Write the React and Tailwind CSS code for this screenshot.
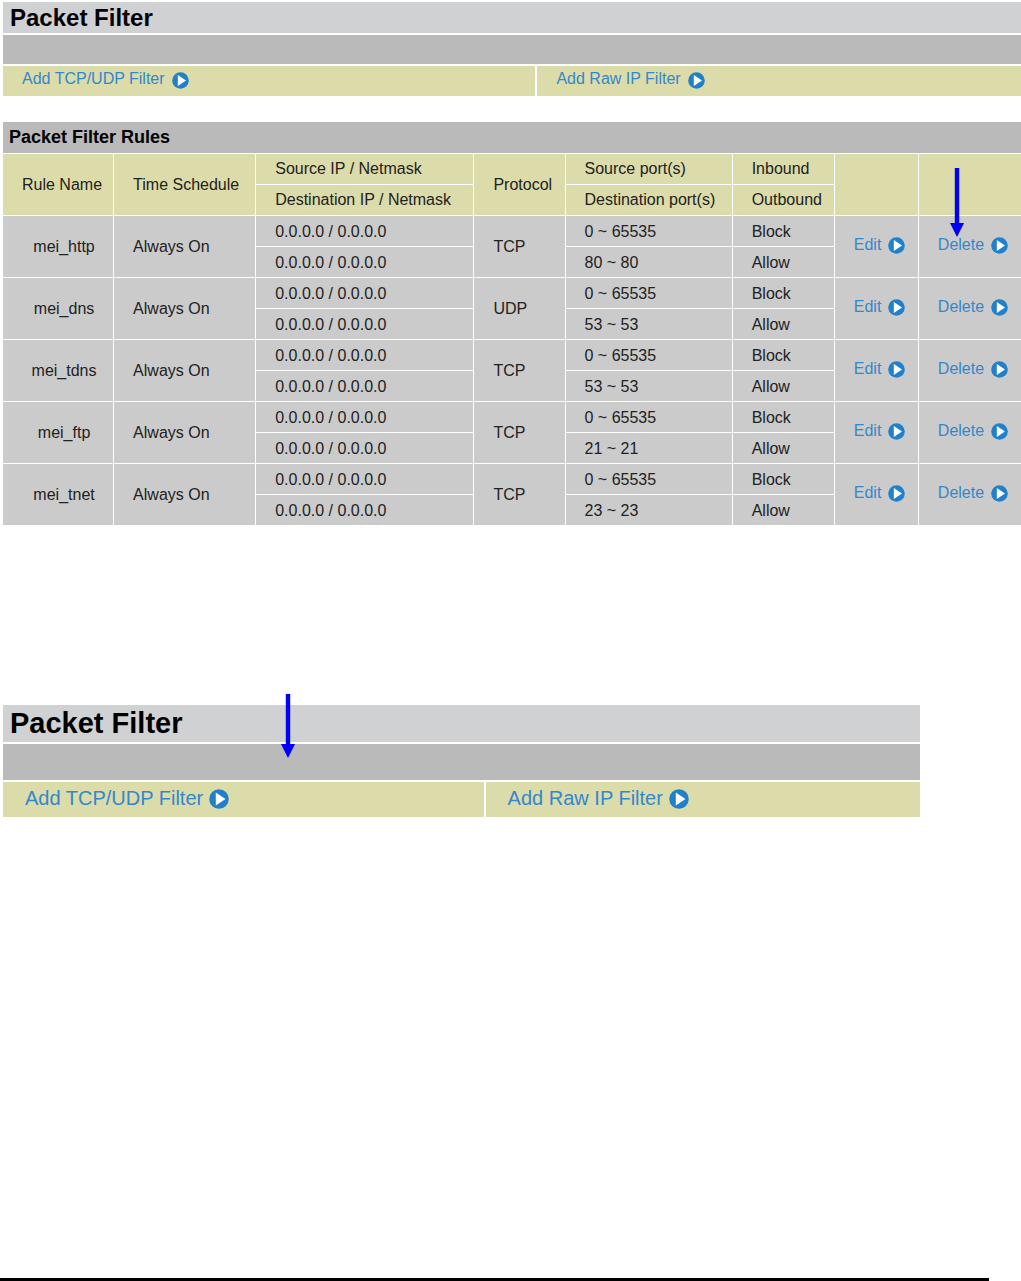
import clsx from 'clsx';

const rules = [
  { name: 'mei_http', protocol: 'TCP', port: '80 ~ 80' },
  { name: 'mei_dns', protocol: 'UDP', port: '53 ~ 53' },
  { name: 'mei_tdns', protocol: 'TCP', port: '53 ~ 53' },
  { name: 'mei_ftp', protocol: 'TCP', port: '21 ~ 21' },
  { name: 'mei_tnet', protocol: 'TCP', port: '23 ~ 23' },
];

const PlayIcon = ({ className }) => (
  <svg viewBox="0 0 17 17" className={clsx('shrink-0', className)} aria-hidden="true">
    <circle cx="8.5" cy="8.5" r="8.3" fill="#2080cc" />
    <path d="M5.8 2.9 L14 8.5 L5.8 14.1 Z" fill="#fff" />
  </svg>
);

const ActionLink = ({ children, large }) => (
  <a
    href="#"
    className={clsx(
      'inline-flex items-center text-[#3388cc] hover:underline',
      large ? 'gap-1.5 text-xl leading-6' : 'gap-[7px] text-base leading-5'
    )}
  >
    {children}
    <PlayIcon className={large ? 'mt-0.5 size-5' : 'mt-0.5 size-[17px]'} />
  </a>
);

// Blue pointer drawn over the tables
const Arrow = ({ className, height }) => (
  <svg
    width="14"
    height={height}
    viewBox={`0 0 14 ${height}`}
    className={clsx('absolute z-10', className)}
    aria-hidden="true"
  >
    <path
      d={`M4.8 0 H9.2 V${height - 14} H14 L7 ${height} L0 ${height - 14} H4.8 Z`}
      fill="#0000ff"
    />
  </svg>
);

const FilterPanel = ({ large }) => (
  <section className="flex flex-col gap-0.5">
    <h1
      className={clsx(
        'bg-[#d0d1d3] pl-[7px] font-bold text-black',
        large ? 'h-[37px] text-[29px] leading-9' : 'h-[31px] text-2xl leading-[31px]'
      )}
    >
      Packet Filter
    </h1>
    <div className={clsx('bg-[#bababa]', large ? 'h-9' : 'h-[29px]')} />
    <nav className={clsx('flex gap-0.5', large ? 'h-[35px]' : 'h-[30px]')}>
      <div className={clsx('bg-[#dcdbaa]', large ? 'w-[52.4%] pt-1 pl-[22px]' : 'w-[52.3%] pt-px pl-[19px]')}>
        <ActionLink large={large}>Add TCP/UDP Filter</ActionLink>
      </div>
      <div className={clsx('flex-1 bg-[#dcdbaa]', large ? 'pt-1 pl-[22px]' : 'pt-px pl-[19px]')}>
        <ActionLink large={large}>Add Raw IP Filter</ActionLink>
      </div>
    </nav>
  </section>
);

const headCell = 'h-[31px] border-t border-l border-white bg-[#dcdbaa] pl-[19px] text-left font-normal';
const cell = 'h-[31px] border-t border-l border-white bg-[#cbcbcb]';
const textCell = clsx(cell, 'pt-0.5 pl-[19px]');
const linkCell = clsx(cell, 'pb-1 pl-[19px]');

const RulesTable = () => (
  <table className="w-full table-fixed border-separate border-spacing-0 text-base leading-5 whitespace-nowrap text-[#222]">
    <colgroup>
      <col className="w-[111px]" />
      <col className="w-[142px]" />
      <col className="w-[218px]" />
      <col className="w-[91px]" />
      <col className="w-[167px]" />
      <col className="w-[102px]" />
      <col className="w-[84px]" />
      <col className="w-[103px]" />
    </colgroup>
    <thead>
      <tr>
        <th rowSpan={2} className={headCell}>Rule Name</th>
        <th rowSpan={2} className={headCell}>Time Schedule</th>
        <th className={headCell}>Source IP / Netmask</th>
        <th rowSpan={2} className={headCell}>Protocol</th>
        <th className={headCell}>Source port(s)</th>
        <th className={headCell}>Inbound</th>
        <th rowSpan={2} className={headCell} aria-label="Edit" />
        <th rowSpan={2} className={clsx(headCell, 'relative')} aria-label="Delete">
          <Arrow height={69} className="top-3.5 left-[31px]" />
        </th>
      </tr>
      <tr>
        <th className={headCell}>Destination IP / Netmask</th>
        <th className={headCell}>Destination port(s)</th>
        <th className={headCell}>Outbound</th>
      </tr>
    </thead>
    {rules.map((rule) => (
      <tbody key={rule.name}>
        <tr>
          <td rowSpan={2} className={clsx(cell, 'pl-3 text-center')}>{rule.name}</td>
          <td rowSpan={2} className={clsx(cell, 'pl-[19px]')}>Always On</td>
          <td className={textCell}>0.0.0.0 / 0.0.0.0</td>
          <td rowSpan={2} className={clsx(cell, 'pl-[19px]')}>{rule.protocol}</td>
          <td className={textCell}>0 ~ 65535</td>
          <td className={textCell}>Block</td>
          <td rowSpan={2} className={linkCell}>
            <ActionLink>Edit</ActionLink>
          </td>
          <td rowSpan={2} className={linkCell}>
            <ActionLink>Delete</ActionLink>
          </td>
        </tr>
        <tr>
          <td className={textCell}>0.0.0.0 / 0.0.0.0</td>
          <td className={textCell}>{rule.port}</td>
          <td className={textCell}>Allow</td>
        </tr>
      </tbody>
    ))}
  </table>
);

const App = () => (
  <div className="flex min-h-screen flex-col overflow-x-hidden bg-white font-['Liberation_Sans',Arial,sans-serif]">
    <main className="pt-0.5 pl-[3px]">
      <FilterPanel />
      <section className="mt-[26px]">
        <h2 className="h-[31px] bg-[#bababa] pl-1.5 text-lg leading-[31px] font-bold text-black">
          Packet Filter Rules
        </h2>
        {/* pulls the first column's white border out of the panel */}
        <div className="-ml-px">
          <RulesTable />
        </div>
      </section>
      <div className="relative mt-[180px] w-[90.1%]">
        <FilterPanel large />
        <Arrow height={64} className="-top-[11px] left-[278px]" />
      </div>
    </main>
    <footer className="mt-auto mr-8 border-t-[3px] border-black" />
  </div>
);

export default App;
